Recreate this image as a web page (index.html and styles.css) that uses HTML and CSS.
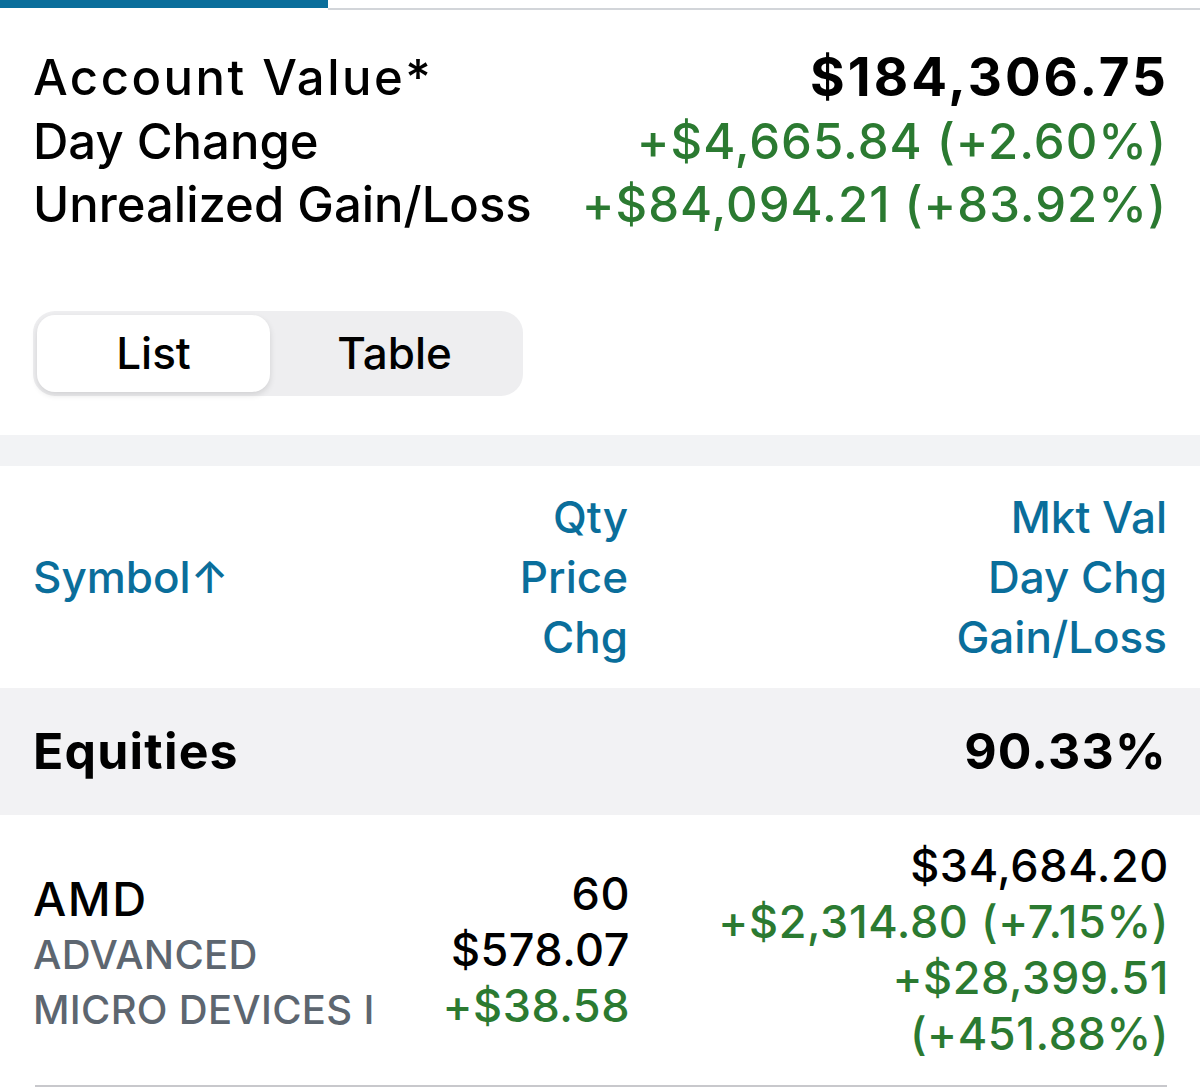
FILE: index.html
```html
<!DOCTYPE html>
<html lang="en">
<head>
    <meta charset="UTF-8">
    <meta name="viewport" content="width=device-width, initial-scale=1.0">
    <title>Positions</title>
    <link rel="stylesheet" href="styles.css">
</head>
<body>
    <div class="tabbar">
        <div class="tab-active"></div>
        <div class="tab-rest"></div>
    </div>

    <div class="summary">
        <div class="summary-row">
            <span class="label wide">Account Value*</span>
            <span class="total">$184,306.75</span>
        </div>
        <div class="summary-row">
            <span class="label">Day Change</span>
            <span class="gain">+$4,665.84 (+2.60%)</span>
        </div>
        <div class="summary-row">
            <span class="label">Unrealized Gain/Loss</span>
            <span class="gain">+$84,094.21 (+83.92%)</span>
        </div>
    </div>

    <div class="segmented">
        <div class="segment selected">List</div>
        <div class="segment">Table</div>
    </div>

    <div class="band"></div>

    <div class="columns header">
        <div class="col-symbol">Symbol↑</div>
        <div class="col-mid">
            <div>Qty</div>
            <div>Price</div>
            <div>Chg</div>
        </div>
        <div class="col-right">
            <div>Mkt Val</div>
            <div>Day Chg</div>
            <div>Gain/Loss</div>
        </div>
    </div>

    <div class="group">
        <span>Equities</span>
        <span>90.33%</span>
    </div>

    <div class="columns position">
        <div class="col-symbol">
            <div class="ticker">AMD</div>
            <div class="company">ADVANCED<br>MICRO DEVICES I</div>
        </div>
        <div class="col-mid">
            <div>60</div>
            <div>$578.07</div>
            <div class="gain">+$38.58</div>
        </div>
        <div class="col-right">
            <div>$34,684.20</div>
            <div class="gain">+$2,314.80 (+7.15%)</div>
            <div class="gain">+$28,399.51</div>
            <div class="gain">(+451.88%)</div>
        </div>
    </div>
</body>
</html>
```

FILE: styles.css
```css
body {
    font-family: Inter, "Liberation Sans", sans-serif;
    font-weight: 500;
    margin: 0;
    padding: 0;
    color: #000;
    background: #fff;
}
.tabbar {
    display: flex;
    align-items: flex-start;
    height: 10px;
}
.tab-active {
    width: 328px;
    height: 8px;
    background-color: #0a6e9b;
}
.tab-rest {
    flex: 1;
    height: 8px;
    border-bottom: 2px solid #d2d5d9;
}
.summary {
    padding: 36px 33px 0 33px;
}
.summary-row {
    display: flex;
    justify-content: space-between;
    font-size: 49px;
    line-height: 63.5px;
}
.wide {
    letter-spacing: 2.5px;
}
.total {
    font-size: 53px;
    font-weight: 700;
    letter-spacing: 3px;
    margin-right: -2px;
}
.summary-row .gain {
    letter-spacing: 1px;
}
.gain {
    color: #2b7a31;
}
.segmented {
    display: flex;
    width: 482px;
    height: 77px;
    margin: 74px 0 0 33px;
    padding: 4px;
    background-color: #eeeef0;
    border-radius: 22px;
}
.segment {
    flex: 1;
    display: flex;
    align-items: center;
    justify-content: center;
    font-size: 44px;
    border-radius: 18px;
}
.segment.selected {
    flex: 0 0 233px;
    background-color: #fff;
    box-shadow: 0 3px 6px rgba(0, 0, 0, 0.12);
}
.band {
    height: 31px;
    margin-top: 39px;
    background-color: #f2f3f5;
}
.columns {
    display: grid;
    grid-template-columns: 363px 232px 1fr;
    padding: 0 33px 0 33px;
}
.header {
    height: 222px;
    align-items: center;
    color: #0a6e9b;
    font-size: 44px;
    line-height: 60px;
}
.col-mid,
.col-right {
    text-align: right;
}
.group {
    display: flex;
    justify-content: space-between;
    align-items: center;
    height: 127px;
    padding: 0 33px 0 33px;
    background-color: #f2f2f4;
    font-size: 50px;
    font-weight: 700;
    letter-spacing: 1.2px;
}
.position {
    align-items: center;
    height: 270px;
    margin: 0 33px 0 35px;
    padding: 0;
    border-bottom: 2px solid #c8c8cc;
    font-size: 45px;
    line-height: 56px;
}
.position .col-mid {
    letter-spacing: 0.5px;
}
.position .col-right {
    margin-right: -2px;
    letter-spacing: 0.6px;
}
.position .col-symbol {
    margin-left: -2px;
    padding-top: 8px;
}
.ticker {
    font-size: 47px;
    letter-spacing: 1.5px;
}
.company {
    color: #5d6670;
    font-size: 40px;
    line-height: 55px;
    letter-spacing: 0.3px;
}
```
